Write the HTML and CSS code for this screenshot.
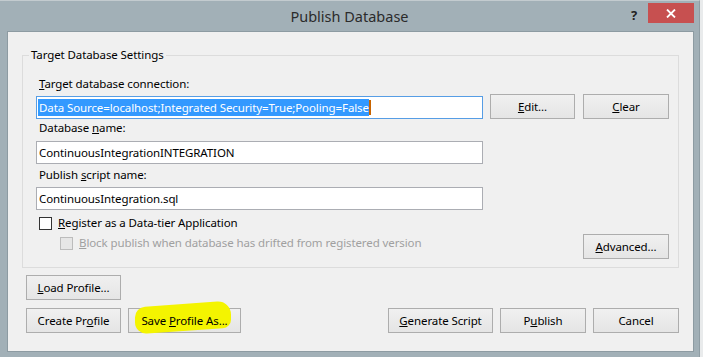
FILE: index.html
```html
<!DOCTYPE html>
<html lang="en">
<head>
  <meta charset="UTF-8" />
  <title>Publish Database</title>
  <link rel="stylesheet" href="styles.css">
</head>
<body>
  <div class="window">
    <div class="titlebar">
      <span></span>
      <div class="title">Publish Database</div>
      <div class="caption-btns">
        <span class="help">?</span>
        <span class="close">
          <svg width="10" height="9" viewBox="0 0 10 9">
            <path d="M1 0.5 L9 8.5 M9 0.5 L1 8.5" stroke="#fff" stroke-width="1.8" fill="none"/>
          </svg>
        </span>
      </div>
    </div>

    <div class="client">
      <fieldset class="group">
        <legend>Target Database Settings</legend>
        <div class="group-body">
          <div class="label label-first"><u>T</u>arget database connection:</div>
          <div class="conn-row">
            <div class="textbox focused"><span class="sel">Data Source=localhost;Integrated Security=True;Pooling=False</span><span class="caret"></span></div>
            <button class="btn btn-edit"><u>E</u>dit...</button>
            <button class="btn btn-clear"><u>C</u>lear</button>
          </div>

          <div class="label label-name">Database <u>n</u>ame:</div>
          <div class="textbox tb-name">ContinuousIntegrationINTEGRATION</div>

          <div class="label label-script">Publish <u>s</u>cript name:</div>
          <div class="textbox tb-script">ContinuousIntegration.sql</div>

          <div class="check-row">
            <span class="checkbox"></span>
            <span><u>R</u>egister as a Data-tier Application</span>
          </div>

          <div class="adv-row">
            <div class="check-row sub disabled">
              <span class="checkbox"></span>
              <span><u>B</u>lock publish when database has drifted from registered version</span>
            </div>
            <button class="btn btn-adv"><u>A</u>dvanced...</button>
          </div>
        </div>
      </fieldset>

      <div class="actions">
        <button class="btn btn-load"><u>L</u>oad Profile...</button>
        <div class="action-row">
          <div class="left">
            <button class="btn btn-create">Create Pr<u>o</u>file</button>
            <button class="btn btn-save"><span class="marked">Save <u>P</u>rofile As...</span></button>
          </div>
          <div class="right">
            <button class="btn btn-gen"><u>G</u>enerate Script</button>
            <button class="btn btn-pub">P<u>u</u>blish</button>
            <button class="btn btn-cancel">Cancel</button>
          </div>
        </div>
      </div>
    </div>
  </div>
</body>
</html>
```

FILE: styles.css
```css
body {
  margin: 0;
  background-color: #e9ebec;
  font-family: "Noto Sans", "Open Sans", sans-serif;
  font-size: 11.5px;
  letter-spacing: -0.1px;
  color: #000;
}

.window {
  width: 700px;
  height: 357px;
  box-sizing: border-box;
  background-color: #a2b0b7;
  border-top: 1px solid #c3cbcf;
  border-right: 1px solid #8f9da4;
}

.titlebar {
  height: 30px;
  display: grid;
  grid-template-columns: 1fr auto 1fr;
  align-items: start;
}

.title {
  font-size: 14.5px;
  letter-spacing: 0;
  color: #2b2b2b;
  padding-top: 5px;
}

.caption-btns {
  justify-self: end;
  display: flex;
  align-items: flex-start;
  padding-top: 2px;
  padding-right: 5px;
}

.help {
  font-weight: bold;
  font-size: 13px;
  color: #222;
  margin-top: 3px;
  margin-right: 11px;
}

.close {
  width: 46px;
  height: 20px;
  background-color: #c75050;
  display: flex;
  align-items: center;
  justify-content: center;
}

.client {
  margin-left: 7px;
  width: 687px;
  height: 321px;
  box-sizing: border-box;
  border: 1px solid #8d9ba2;
  background-color: #f0f0f0;
}

.group {
  margin: 15px 14px 0 14px;
  padding: 0;
  border: 1px solid #dcdcdc;
  min-width: 0;
}

.group legend {
  margin-left: 6px;
  padding: 0 2px;
  line-height: 16px;
}

.group-body {
  padding: 13px 9px 8px 13px;
}

.label {
  line-height: 16px;
  padding-left: 3px;
}

.label-name { margin-top: 1px; }
.label-script { margin-top: 3px; }

.conn-row {
  display: flex;
  align-items: flex-end;
  margin-top: 2px;
}

.textbox {
  width: 447px;
  height: 23px;
  box-sizing: border-box;
  border: 1px solid #abadb3;
  background-color: #fff;
  padding-left: 2px;
  line-height: 21px;
  white-space: nowrap;
  overflow: hidden;
  display: flex;
  align-items: center;
}

.textbox.focused {
  border-color: #569de5;
  padding-left: 1px;
}

.sel {
  background-color: #3399ff;
  color: #fff;
  line-height: 17px;
  padding-left: 1px;
}

.caret {
  width: 2px;
  height: 15px;
  background-color: #c86400;
}

.tb-name { margin-top: 5px; }
.tb-script { margin-top: 4px; }

.btn {
  height: 25px;
  box-sizing: border-box;
  border: 1px solid #adadad;
  background: linear-gradient(#f0f0f0, #e5e5e5);
  font-family: inherit;
  font-size: 11.5px;
  letter-spacing: -0.1px;
  color: #000;
  padding: 0;
}

.btn-edit { width: 85px; margin-left: 7px; }
.btn-clear { width: 86px; margin-left: 8px; }
.btn-adv { width: 86px; }

.check-row {
  display: flex;
  align-items: center;
  gap: 6px;
  line-height: 16px;
  margin-top: 5px;
  padding-left: 3px;
}

.checkbox {
  width: 13px;
  height: 13px;
  box-sizing: border-box;
  border: 1px solid #333;
  background-color: #fff;
}

.adv-row {
  display: flex;
  justify-content: space-between;
  align-items: flex-start;
  margin-top: 3px;
}

.check-row.sub {
  margin-top: 1px;
  padding-left: 24px;
}

.disabled {
  color: #a0a0a0;
}

.disabled .checkbox {
  border-color: #bcbcbc;
  background-color: #e6e6e6;
}

.actions {
  padding: 7px 14px 0 18px;
}

.btn-load { width: 95px; }

.action-row {
  display: flex;
  justify-content: space-between;
  margin-top: 8px;
}

.action-row .left,
.action-row .right {
  display: flex;
  gap: 7px;
}

.btn-create { width: 95px; }
.btn-save { width: 113px; position: relative; }
.btn-gen { width: 105px; }
.btn-pub { width: 86px; }
.btn-cancel { width: 86px; }

/* yellow highlighter mark over the button */
.btn-save::before {
  content: "";
  position: absolute;
  left: 6px;
  top: -5px;
  width: 96px;
  height: 27px;
  background-color: #f4f400;
  border-radius: 10px 14px 8px 12px;
  transform: skewY(-4deg);
}

.marked {
  position: relative;
}
```
